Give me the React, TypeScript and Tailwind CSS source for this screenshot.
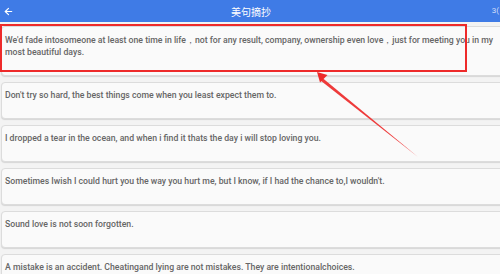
import React from 'react';
import { ArrowLeft } from 'lucide-react';

const quotes = [
  "Don't try so hard, the best things come when you least expect them to.",
  'I dropped a tear in the ocean, and when i find it thats the day i will stop loving you.',
  "Sometimes Iwish I could hurt you the way you hurt me, but I know, if I had the chance to,I wouldn't.",
  'Sound love is not soon forgotten.',
  'A mistake is an accident. Cheatingand lying are not mistakes. They are intentionalchoices.',
];

export default function App() {
  return (
    <div className="relative w-[500px] h-[274px] overflow-hidden bg-[#f3f3f3] font-['Roboto',sans-serif]">
      <header className="h-[22px] bg-[#3f7be6] grid grid-cols-[1fr_auto_1fr] items-center text-white pl-[3px] pr-[1px]">
        <ArrowLeft className="w-[11px] h-[11px]" strokeWidth={2.5} />
        <span className="text-[10px] font-['Noto_Sans_CJK_SC',sans-serif]">美句摘抄</span>
        <span className="justify-self-end text-[8px] text-white/75">3(</span>
      </header>

      <div className="w-[510px] pl-[1px] pt-[4px] flex flex-col gap-[6px] text-[8.7px] leading-[12px] font-medium text-[#666] whitespace-nowrap">
        <div className="h-[50px] rounded-[4px] border border-[#dcdcdc] bg-[#fafafa] shadow-[0_1px_1px_rgba(0,0,0,0.12)] px-[3px] pt-[7px]">
          <p>We'd fade intosomeone at least one time in life，not for any result, company, ownership even love，just for meeting you in my</p>
          <p>most beautiful days.</p>
        </div>
        {quotes.map((q) => (
          <div
            key={q}
            className="h-[37px] rounded-[4px] border border-[#dcdcdc] bg-[#fafafa] shadow-[0_1px_1px_rgba(0,0,0,0.12)] px-[3px] pt-[6px]"
          >
            {q}
          </div>
        ))}
      </div>

      {/* annotation */}
      <div className="absolute left-0 top-[24px] w-[467px] h-[48px] border-2 border-[#ee2a2a]" />
      <svg className="absolute left-0 top-0" width="500" height="274">
        <polygon points="418,157 320.5,80.5 322.5,78 " fill="#ee3a3a" />
        <polygon points="317,72 327.5,75 320,82.5" fill="#ee2a2a" />
      </svg>
    </div>
  );
}
